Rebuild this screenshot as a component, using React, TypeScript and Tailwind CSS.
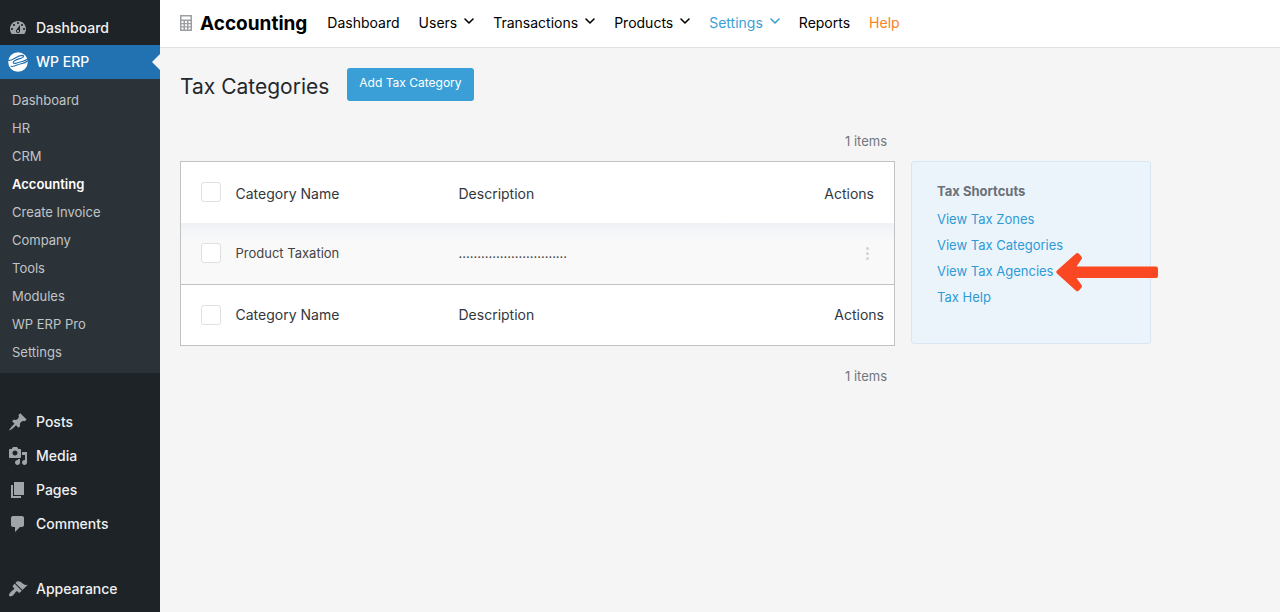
import { clsx } from 'clsx';

const ICONS = {
  dashboard:
    'M3.76 16h12.48c1.1-1.37 1.76-3.11 1.76-5 0-4.42-3.58-8-8-8s-8 3.58-8 8c0 1.89.66 3.63 1.76 5zM10 4c.55 0 1 .45 1 1s-.45 1-1 1-1-.45-1-1 .45-1 1-1zM6 6c.55 0 1 .45 1 1s-.45 1-1 1-1-.45-1-1 .45-1 1-1zm8 0c.55 0 1 .45 1 1s-.45 1-1 1-1-.45-1-1 .45-1 1-1zm-5.37 5.55L12 7v6c0 1.1-.9 2-2 2s-2-.9-2-2c0-.57.24-1.08.63-1.45zM4 10c.55 0 1 .45 1 1s-.45 1-1 1-1-.45-1-1 .45-1 1-1zm12 0c.55 0 1 .45 1 1s-.45 1-1 1-1-.45-1-1 .45-1 1-1zm-5 3c0-.55-.45-1-1-1s-1 .45-1 1 .45 1 1 1 1-.45 1-1z',
  posts:
    'M10.44 3.02l1.82-1.82 6.36 6.35-1.83 1.82c-1.05-.68-2.48-.57-3.41.36l-.75.75c-.92.93-1.04 2.35-.35 3.41l-1.83 1.82-2.41-2.41-2.8 2.79c-.42.42-3.38 2.71-3.8 2.29s1.86-3.39 2.28-3.81l2.79-2.79L4.1 9.36l1.83-1.82c1.05.69 2.48.57 3.4-.36l.75-.75c.93-.92 1.05-2.35.36-3.41z',
  media:
    'M13 11V4c0-.55-.45-1-1-1h-1.67L9 1H5L3.67 3H2c-.55 0-1 .45-1 1v7c0 .55.45 1 1 1h10c.55 0 1-.45 1-1zM7 4.5c1.38 0 2.5 1.12 2.5 2.5S8.38 9.5 7 9.5 4.5 8.38 4.5 7 5.62 4.5 7 4.5zM14 6h5v10.5c0 1.38-1.12 2.5-2.5 2.5S14 17.88 14 16.5s1.12-2.5 2.5-2.5c.17 0 .34.02.5.05V9h-3V6zm-4 8.05V13h2v3.5c0 1.38-1.12 2.5-2.5 2.5S7 17.88 7 16.5 8.12 14 9.5 14c.17 0 .34.02.5.05z',
  pages: 'M6 15V2h10v13H6zm-1 1h8v2H3V5h2v11z',
  comments:
    'M5 2h9c1.1 0 2 .9 2 2v7c0 1.1-.9 2-2 2h-2l-5 5v-5H5c-1.1 0-2-.9-2-2V4c0-1.1.9-2 2-2z',
  appearance:
    'M14.48 11.06L7.41 3.99l1.5-1.5c.5-.56 2.3-.47 3.51.32 1.21.8 1.43 1.28 2.91 2.1 1.18.64 2.45 1.26 4.45.85zm-.71.71L6.7 4.7 4.93 6.47c-.39.39-.39 1.02 0 1.41l1.06 1.06c.39.39.39 1.03 0 1.42-.6.6-1.43 1.11-2.21 1.69-.35.26-.7.53-1.01.84C1.43 14.23.4 16.08 1.4 17.07c.99 1 2.84-.03 4.18-1.36.31-.31.58-.66.85-1.02.57-.78 1.08-1.61 1.69-2.21.39-.39 1.02-.39 1.41 0l1.06 1.06c.39.39 1.02.39 1.41 0z',
};

type IconName = keyof typeof ICONS;

const ERP_LINKS = [
  'Dashboard',
  'HR',
  'CRM',
  'Accounting',
  'Create Invoice',
  'Company',
  'Tools',
  'Modules',
  'WP ERP Pro',
  'Settings',
];

const CONTENT_LINKS: { label: string; icon: IconName }[] = [
  { label: 'Posts', icon: 'posts' },
  { label: 'Media', icon: 'media' },
  { label: 'Pages', icon: 'pages' },
  { label: 'Comments', icon: 'comments' },
];

const TOP_NAV = [
  { label: 'Dashboard' },
  { label: 'Users', menu: true },
  { label: 'Transactions', menu: true },
  { label: 'Products', menu: true },
  { label: 'Settings', menu: true, tone: 'text-[#3c9fd4]' },
  { label: 'Reports' },
  { label: 'Help', tone: 'text-[#fa8127]' },
];

const SHORTCUTS = [
  'View Tax Zones',
  'View Tax Categories',
  'View Tax Agencies',
  'Tax Help',
];

function MenuLink({ label, icon }: { label: string; icon: IconName }) {
  return (
    <a href="#" className="flex h-[34px] items-center gap-2 pl-2 text-sm font-medium text-[#f0f0f1]">
      <svg viewBox="0 0 20 20" className="size-5 fill-[#a0a5aa]" aria-hidden="true">
        <path d={ICONS[icon]} />
      </svg>
      {label}
    </a>
  );
}

function ErpLogo() {
  return (
    <svg viewBox="0 0 20 20" className="size-5" aria-hidden="true">
      <circle cx="10" cy="10" r="9.800" fill="#fff" />
      <g fill="none" stroke="#2271b1" strokeWidth="1.1" strokeLinecap="round" strokeLinejoin="round">
        <path d="M.5 8.500C5 8.800 8.500 3.600 14 3.400c2.200 0 2 1.500.2 2.300C11 7 5.500 8.200 5.200 10.400c0 2 4.300.6 7-.3 3-1 5.300-1.300 7.300-3.100" />
        <path d="M3 14.300c2 .5 4-.3 6-1.300 3.500-1.700 7.500-1 10.500-4" />
      </g>
    </svg>
  );
}

function Sidebar() {
  return (
    <aside className="w-40 shrink-0 bg-[#1d2327] pt-[11px]">
      <MenuLink label="Dashboard" icon="dashboard" />
      <a
        href="#"
        className="relative flex h-[34px] items-center gap-2 bg-[#2271b1] pl-2 text-sm font-medium text-white"
      >
        <ErpLogo />
        WP ERP
        <span className="absolute top-[9px] right-0 border-y-8 border-r-8 border-y-transparent border-r-[#f5f5f5]" />
      </a>
      <ul className="bg-[#2c3338] pt-2 pb-1.5">
        {ERP_LINKS.map((label) => (
          <li key={label}>
            <a
              href="#"
              className={clsx(
                'flex h-7 items-center pl-3 text-[13px]',
                label === 'Accounting' ? 'font-semibold text-white' : 'text-[#c0c4c8]',
              )}
            >
              {label}
            </a>
          </li>
        ))}
      </ul>
      <div className="mt-8">
        {CONTENT_LINKS.map((link) => (
          <MenuLink key={link.label} {...link} />
        ))}
      </div>
      <div className="mt-[31px]">
        <MenuLink label="Appearance" icon="appearance" />
      </div>
    </aside>
  );
}

function CalculatorIcon() {
  return (
    <svg viewBox="0 0 12 16" className="h-4 w-3" aria-hidden="true">
      <rect width="12" height="16" fill="#9b9ea3" />
      <g fill="#fff">
        <path d="M1.500 1.500h9v3h-9z" />
        <path d="M1.500 6h2v2h-2zM5 6h2v2H5zM8.500 6h2v2h-2zM1.500 9.300h2v2h-2zM5 9.300h2v2H5zM8.500 9.300h2v2h-2zM1.500 12.600h2v2h-2zM5 12.600h2v2H5zM8.500 12.600h2v2h-2z" />
      </g>
    </svg>
  );
}

function MenuChevron() {
  return (
    <svg viewBox="0 0 10 6" className="mb-1 h-1.5 w-2.5" aria-hidden="true">
      <path
        d="M1 1l4 4 4-4"
        fill="none"
        stroke="currentColor"
        strokeWidth="1.6"
        strokeLinecap="round"
        strokeLinejoin="round"
      />
    </svg>
  );
}

function TopBar() {
  return (
    <header className="flex h-12 items-center border-b border-[#e2e2e2] bg-white pb-0.5 pl-5">
      <CalculatorIcon />
      <h1 className="ml-2 pt-0.5 text-[19px] leading-6 font-bold text-black">Accounting</h1>
      <nav className="ml-5 flex items-center gap-[19px] text-sm">
        {TOP_NAV.map(({ label, menu, tone }) =>
          menu ? (
            <button
              key={label}
              type="button"
              aria-haspopup="menu"
              className={clsx('flex items-center gap-[7px]', tone ?? 'text-black')}
            >
              {label}
              <MenuChevron />
            </button>
          ) : (
            <a key={label} href="#" className={tone ?? 'text-black'}>
              {label}
            </a>
          ),
        )}
      </nav>
    </header>
  );
}

function Tick({ label }: { label: string }) {
  return (
    <input
      type="checkbox"
      aria-label={label}
      className="block size-5 appearance-none rounded-[3px] border border-[#e0e0e0] bg-white"
    />
  );
}

function HeadingCells({ pad, last }: { pad?: string; last: string }) {
  return (
    <>
      <th scope="col" className="w-[55px] pl-5">
        <Tick label="Select all" />
      </th>
      <th scope="col" className={clsx('w-[223px] text-left font-normal', pad)}>
        Category Name
      </th>
      <th scope="col" className={clsx('text-left font-normal', pad)}>
        Description
      </th>
      <th scope="col" className={clsx('text-right font-normal', pad, last)}>
        Actions
      </th>
    </>
  );
}

function CategoryTable() {
  return (
    <table className="w-full border-collapse border border-[#c0c2c5] bg-white text-sm text-[#32373c]">
      <thead>
        <tr className="h-[61px]">
          <HeadingCells pad="pt-1" last="pr-5" />
        </tr>
      </thead>
      <tbody>
        <tr className="h-[62px] border-b border-[#c0c2c5] bg-[#f9f9f9] bg-linear-to-b from-[#eff2f6] to-[#f9f9f9] to-30% text-[13px] text-[#444]">
          <td className="pl-5">
            <Tick label="Select Product Taxation" />
          </td>
          <td>Product Taxation</td>
          <td>.............................</td>
          <td className="pr-5">
            <button type="button" aria-label="Row actions" className="ml-auto flex w-3.5 flex-col items-center gap-0.5">
              <span className="size-[3px] rounded-full bg-[#d0d2d5]" />
              <span className="size-[3px] rounded-full bg-[#d0d2d5]" />
              <span className="size-[3px] rounded-full bg-[#d0d2d5]" />
            </button>
          </td>
        </tr>
      </tbody>
      <tfoot>
        <tr className="h-[61px]">
          <HeadingCells last="pr-2.5" />
        </tr>
      </tfoot>
    </table>
  );
}

function Shortcuts() {
  return (
    <aside className="h-[183px] w-60 shrink-0 rounded-[3px] border border-[#d8e6f3] bg-[#ecf4fb] px-[25px] pt-[19px] text-[13px]">
      <h3 className="leading-5 font-bold text-[#6b7177]">Tax Shortcuts</h3>
      <ul className="mt-1.5">
        {SHORTCUTS.map((label) => (
          <li key={label} className="relative flex h-[26px] items-center">
            <a href="#" className="text-[#2e9bd6]">
              {label}
            </a>
            {label === 'View Tax Agencies' ? (
              <svg viewBox="0 0 102 40" className="absolute left-[119px] h-10 w-[102px]" aria-hidden="true">
                <path
                  d="M1 18.500 20 1.500q1.500-1.200 3 .2l2.500 3q1 1.300 0 2.600L20.500 14.500H100q2 0 2 2v7.500q0 2-2 2H20.500l5 7q1 1.300 0 2.600l-2.500 3q-1.500 1.400-3 .2L1 21.500q-1.500-1.500 0-3z"
                  fill="#f94822"
                />
              </svg>
            ) : null}
          </li>
        ))}
      </ul>
    </aside>
  );
}

export default function App() {
  return (
    <div className="flex min-h-screen bg-[#f5f5f5] font-[Inter,sans-serif]">
      <Sidebar />
      <div className="min-w-0 flex-1">
        <TopBar />
        <main className="px-5 pt-5">
          <div className="flex items-center gap-4.5">
            <h2 className="pt-1 text-[21px] leading-7 text-[#23282d]">Tax Categories</h2>
            <button
              type="button"
              className="h-[33px] rounded-[3px] bg-[#3a9fd6] px-3 pb-1 text-xs text-white"
            >
              Add Tax Category
            </button>
          </div>
          <div className="mt-[30px] flex max-w-[971px] gap-4">
            <div className="min-w-0 flex-1 text-[13px] text-[#72777c]">
              <p className="pr-2 pb-2.5 text-right leading-5">1 items</p>
              <CategoryTable />
              <p className="pt-5 pr-2 text-right leading-5">1 items</p>
            </div>
            <div className="pt-[30px]">
              <Shortcuts />
            </div>
          </div>
        </main>
      </div>
    </div>
  );
}
